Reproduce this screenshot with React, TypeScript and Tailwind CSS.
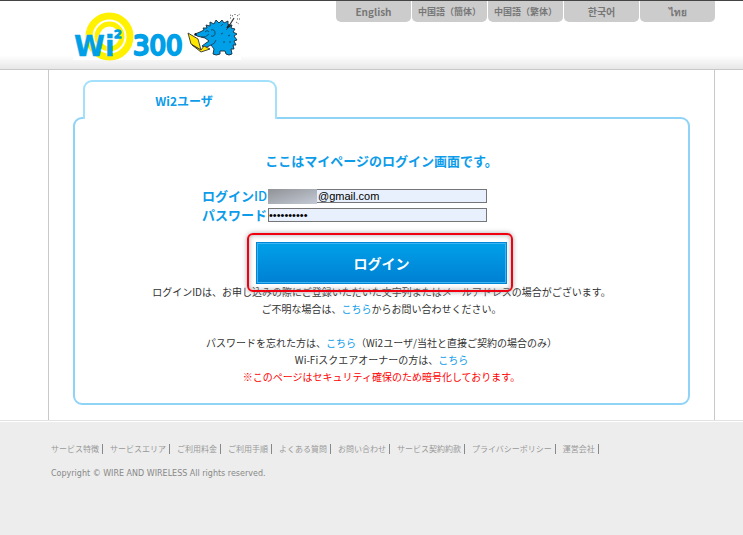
import React, { useState } from "react";

const languages = [
  { name: "English", size: "text-[10px]" },
  { name: "中国語（簡体）", size: "text-[9px]" },
  { name: "中国語（繁体）", size: "text-[9px]" },
  { name: "한국어", size: "text-[10px]" },
  { name: "ไทย", size: "text-[10px]" },
];

const footerLinks = [
  "サービス特徴",
  "サービスエリア",
  "ご利用料金",
  "ご利用手順",
  "よくある質問",
  "お問い合わせ",
  "サービス契約約款",
  "プライバシーポリシー",
  "運営会社",
];

const Logo = () => (
  <svg width="168" height="48" viewBox="0 0 168 48" role="img" aria-label="Wi2 300" className="overflow-visible bg-white">
    <circle cx="36.5" cy="24.5" r="20.5" fill="none" stroke="#fff100" strokeWidth="7" />
    <circle cx="36.5" cy="24.5" r="12.5" fill="none" stroke="#fff100" strokeWidth="5" />
    <g
      fill="#00a0e9"
      fontFamily="'DejaVu Sans', sans-serif"
      stroke="#00a0e9"
      strokeLinejoin="round"
    >
      <text x="1" y="44" fontSize="28" fontWeight="bold" strokeWidth="0.4">Wi</text>
      <text x="41" y="33" fontSize="20" strokeWidth="1.4">²</text>
      <text x="60" y="43" fontSize="26" strokeWidth="2.4">300</text>
    </g>
    {/* hedgehog */}
    <path
      d="M122 22 L127 20 L131 18 L130 16 L134 16 L133 13 L137 14 L137 10 L141 12 L143 8 L146 11 L149 8 L151 11 L155 9 L155 13 L159 13 L158 16 L162 17 L160 20 L164 22 L161 24 L164 28 L161 29 L163 33 L160 33 L161 37 L158 37 L159 42 Q156 44 153 42 L152 39 L147 39 L147 42 Q143 44 140 42 L141 37 L138 33 L132 36 L129 34 L133 31 L136 29 L132 26 L124 24 Z"
      fill="#00a0e9"
      stroke="#1c2a33"
      strokeWidth="0.9"
      strokeLinejoin="round"
    />
    <circle cx="122.5" cy="22.5" r="1.2" fill="#111" />
    <path
      d="M132 20q2-3 4 0M128 25q5 1 8-3M138 18q4-1 4 3t-4 3M148 14l2-2M153 18l2-2M155 24l2-1M148 22l2-1M156 30l2 0M150 30l2 0M138 33q4-1 5-5"
      fill="none"
      stroke="#1c2a33"
      strokeWidth="0.7"
    />
    <path d="M154 16l2-3 1 1z" fill="#222" stroke="#222" strokeWidth="1.5" />
    <path d="M156 14l5-8" stroke="#333" strokeWidth="1.2" />
    <path
      d="M160 4l-3-1M162 3l0-2M164 4l3-2M164 7l3 0M163 10l3 2M158 6l-2 0"
      stroke="#444"
      strokeWidth="1"
      strokeDasharray="1 1"
    />
    <path d="M115 21l10 6 3 11-10-6z" fill="#ffe600" stroke="#333" strokeWidth="0.9" strokeLinejoin="round" />
    <path d="M119 33l9 7 9-3-6-3-3 4z" fill="#ffe600" stroke="#333" strokeWidth="0.9" strokeLinejoin="round" />
  </svg>
);

const Header = () => (
  <header className="flex h-[70px] justify-between border-t border-b border-t-[#444] border-b-[#c8c8c8] bg-linear-to-b from-white from-80% to-[#e7e7e7] pr-[28px] pl-[73px] shadow-[0_1px_2px_#ddd]">
    <a href="#" className="mt-[11px]">
      <Logo />
    </a>
    <nav className="flex h-[21px] gap-px">
      {languages.map((language) => (
        <a
          key={language.name}
          href="#"
          className={
            "flex w-[75px] items-center justify-center rounded-b-[5px] bg-[#ccc] font-bold whitespace-nowrap text-[#777] " +
            language.size
          }
        >
          {language.name}
        </a>
      ))}
    </nav>
  </header>
);

const LoginForm = () => {
  const [loginId, setLoginId] = useState("@gmail.com");
  const [password, setPassword] = useState("0123456789");

  return (
    <form onSubmit={(e) => e.preventDefault()}>
      <div className="ml-[125px] grid grid-cols-[67px_219px] gap-x-px gap-y-[5px] text-[13px] leading-[14px] font-bold text-[#0c9ce9]">
        <label htmlFor="loginId" className="text-right">
          ログイン<span className="font-medium">ID</span>
        </label>
        <div className="relative">
          <input
            id="loginId"
            type="text"
            value={loginId}
            onChange={(e) => setLoginId(e.target.value)}
            className="block h-[14px] w-full border border-[#767676] bg-[#e8f0fe] pl-[49px] font-['Liberation_Sans',sans-serif] text-[11px] font-normal text-black"
          />
          <span className="absolute top-0 left-0 h-[15px] w-[49px] bg-linear-to-br from-[#909296] to-[#c4cad6]" />
        </div>
        <label htmlFor="password" className="text-right">
          パスワード
        </label>
        <input
          id="password"
          type="password"
          value={password}
          onChange={(e) => setPassword(e.target.value)}
          className="block h-[14px] w-full border border-[#767676] bg-[#e8f0fe] font-['Liberation_Sans',sans-serif] text-[11px] font-normal text-black"
        />
      </div>
      <div className="relative mx-auto mt-[20px] w-[251px]">
        <button
          type="submit"
          className="block h-[42px] w-full border border-[#0086d6] bg-linear-to-b from-[#00a0e9] to-[#0080d2] text-[14px] font-bold text-white shadow-[inset_0_0_0_1px_#3db5f2]"
        >
          ログイン
        </button>
        <span className="pointer-events-none absolute -top-[9px] -right-[6px] -bottom-[8px] -left-[9px] rounded-[6px] border-2 border-[#f00010] shadow-[0_0_5px_#aaa,inset_0_0_5px_#aaa]" />
      </div>
    </form>
  );
};

const App = () => {
  return (
    <div className="min-h-screen bg-[#ededed] font-['Noto_Sans_CJK_JP','Noto_Sans',sans-serif]">
      <Header />
      <div className="border-b border-[#e2e2e2] bg-white pr-[28px] pl-[48px]">
        <main className="border-x border-[#c8c8c8] px-[24px] pt-[10px] pb-[15px]">
          <h2 className="relative ml-[10px] flex h-[39px] w-[194px] items-center justify-center rounded-t-[9px] border-2 border-b-0 border-[#a3e0fb] bg-white pl-[8px] text-[12px] font-bold text-[#0c9ce9]">
            Wi2ユーザ
          </h2>
          <section className="-mt-[2px] rounded-[9px] border-2 border-[#8fd3f6] pt-[32px] pb-[18px]">
            <h1 className="mb-[18px] text-center text-[13px] leading-[20px] font-bold text-[#0c9ce9]">
              ここはマイページのログイン画面です。
            </h1>
            <LoginForm />
            <div className="-mt-px text-center text-[10px] leading-[17px] text-[#333]">
              <p>ログインIDは、お申し込みの際にご登録いただいた文字列またはメールアドレスの場合がございます。</p>
              <p className="mb-[17px]">
                ご不明な場合は、<a href="#" className="text-[#0c9ce9]">こちら</a>からお問い合わせください。
              </p>
              <p>
                パスワードを忘れた方は、<a href="#" className="text-[#0c9ce9]">こちら</a>（Wi2ユーザ/当社と直接ご契約の場合のみ）
              </p>
              <p>
                Wi-Fiスクエアオーナーの方は、<a href="#" className="text-[#0c9ce9]">こちら</a>
              </p>
              <p className="text-[#f00]">※このページはセキュリティ確保のため暗号化しております。</p>
            </div>
          </section>
        </main>
      </div>
      <footer className="border-t border-white pt-[22px] pl-[51px] text-[8px] text-[#999]">
        <ul className="flex gap-[7px] leading-[10px]">
          {footerLinks.map((link) => (
            <li key={link} className="border-r border-[#888] pr-[3px]">
              <a href="#">{link}</a>
            </li>
          ))}
        </ul>
        <p className="mt-[15px] font-['DejaVu_Sans',sans-serif] leading-[10px] text-[#888]">
          Copyright © WIRE AND WIRELESS All rights reserved.
        </p>
      </footer>
    </div>
  );
};

export default App;
